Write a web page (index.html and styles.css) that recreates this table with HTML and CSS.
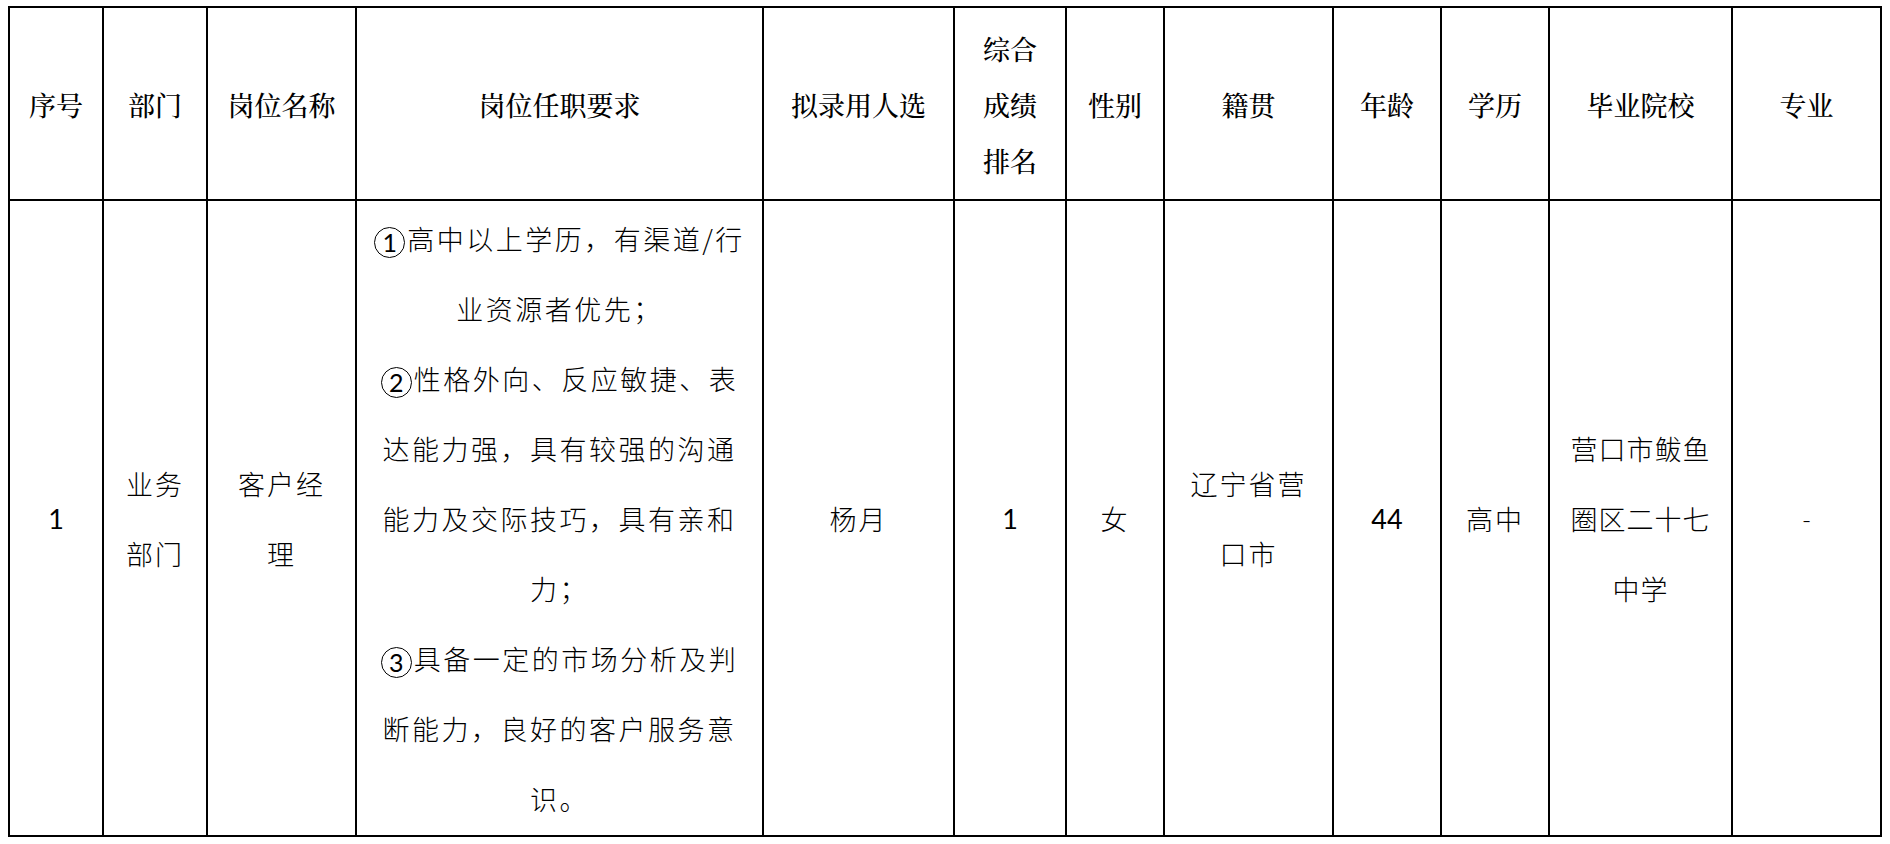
FILE: index.html
```html
<!DOCTYPE html>
<html lang="zh-CN">
<head>
<meta charset="utf-8">
<title>拟录用人员公示</title>
<link rel="stylesheet" href="styles.css">
</head>
<body>
<div class="sheet">
  <div class="cell head">序号</div>
  <div class="cell head">部门</div>
  <div class="cell head">岗位名称</div>
  <div class="cell head">岗位任职要求</div>
  <div class="cell head">拟录用人选</div>
  <div class="cell head stack">综合<br>成绩<br>排名</div>
  <div class="cell head">性别</div>
  <div class="cell head">籍贯</div>
  <div class="cell head">年龄</div>
  <div class="cell head">学历</div>
  <div class="cell head">毕业院校</div>
  <div class="cell head">专业</div>

  <div class="cell body num">1</div>
  <div class="cell body">业务<br>部门</div>
  <div class="cell body">客户经<br>理</div>
  <div class="cell body req"><p class="para"><span class="circ">1</span>高中以上学历，有渠道/行<br>业资源者优先；<br><span class="circ">2</span>性格外向、反应敏捷、表<br>达能力强，具有较强的沟通<br>能力及交际技巧，具有亲和<br>力；<br><span class="circ">3</span>具备一定的市场分析及判<br>断能力，良好的客户服务意<br>识。</p></div>
  <div class="cell body">杨月</div>
  <div class="cell body num">1</div>
  <div class="cell body">女</div>
  <div class="cell body">辽宁省营<br>口市</div>
  <div class="cell body num">44</div>
  <div class="cell body">高中</div>
  <div class="cell body school">营口市鲅鱼<br>圈区二十七<br>中学</div>
  <div class="cell body dash">-</div>
</div>
</body>
</html>
```

FILE: styles.css
```css
html, body {
  margin: 0;
  padding: 0;
  background: #ffffff;
}

body {
  color: #000000;
  font-family: "Noto Sans CJK SC", "Noto Sans", sans-serif;
}

.sheet {
  display: grid;
  grid-template-columns: 94px 104px 149px 407px 191px 112px 98px 169px 108px 108px 183px 149px;
  grid-template-rows: 193px 636px;
  width: max-content;
  margin: 6px 0 0 8px;
  border-left: 2px solid #000;
  border-top: 2px solid #000;
}

.cell {
  box-sizing: border-box;
  border-right: 2px solid #000;
  border-bottom: 2px solid #000;
  display: flex;
  align-items: center;
  justify-content: center;
  text-align: center;
}

.head {
  font-family: "Noto Serif CJK SC", "Noto Sans CJK SC", serif;
  font-size: 27px;
  line-height: 56px;
  font-weight: 500;
  padding-top: 2px;
}

.body {
  font-size: 27px;
  line-height: 70px;
  letter-spacing: 2px;
  font-weight: 300;
  padding-top: 2px;
}

.req {
  letter-spacing: 2.5px;
}

.para {
  margin: 0;
  white-space: nowrap;
}

.circ {
  display: inline-block;
  box-sizing: border-box;
  width: 31px;
  height: 31px;
  border: 1.5px solid #000;
  border-radius: 50%;
  font-family: "Lato", "Open Sans", sans-serif;
  font-size: 25px;
  font-weight: 400;
  line-height: 28px;
  letter-spacing: 0;
  text-align: center;
  vertical-align: -2px;
  margin: 0 2px 0 0;
}

.school {
  letter-spacing: 1px;
}

.num {
  font-family: "Lato", "Open Sans", sans-serif;
  font-weight: 400;
  font-size: 27px;
  letter-spacing: 0;
}

.dash {
  font-family: "Lato", sans-serif;
  font-size: 26px;
  letter-spacing: 0;
}
```
